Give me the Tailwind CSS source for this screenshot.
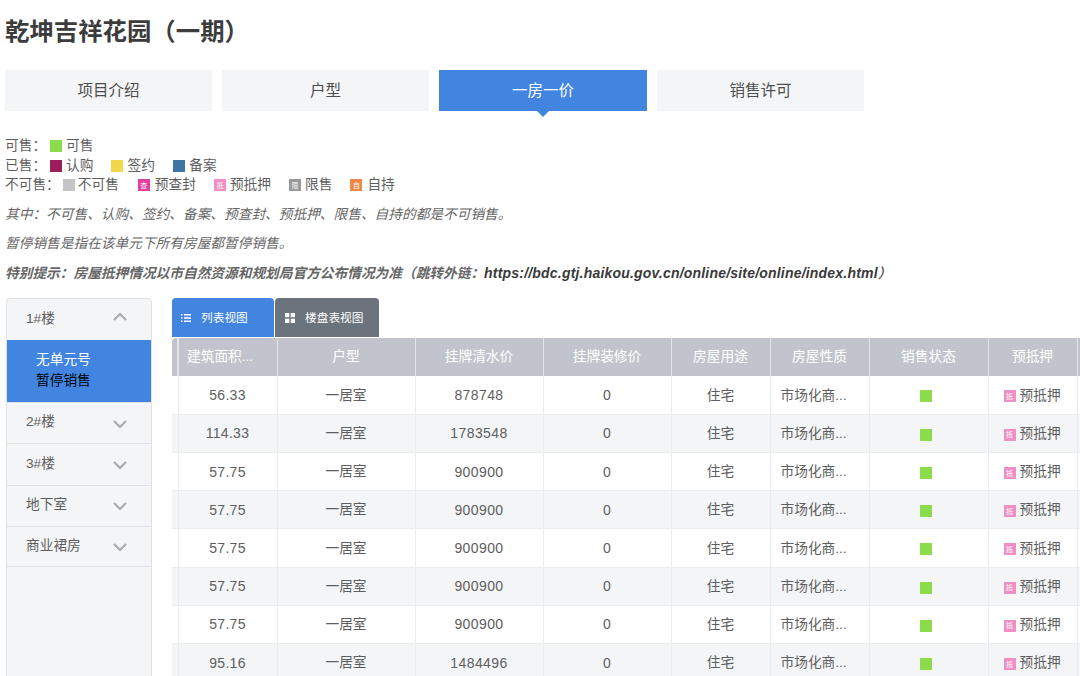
<!DOCTYPE html>
<html lang="zh-CN">
<head>
  <meta charset="UTF-8" />
  <title>乾坤吉祥花园（一期）</title>
  <script src="https://cdn.jsdelivr.net/npm/@tailwindcss/browser@4"></script>
</head>
<body class="bg-white text-[#5e5e5e] text-[13.7px] overflow-hidden font-['Liberation_Sans','Noto_Sans_CJK_SC',sans-serif]">
  <div class="w-[1080px] h-[676px] overflow-hidden pl-[5px]">

    <h1 class="text-[24.4px] leading-[32px] font-bold text-[#3c3c3c] pt-[16px]">乾坤吉祥花园（一期）</h1>

    <!-- tabs -->
    <div class="flex gap-[10px] mt-[22px] text-[15.5px] text-[#4d4d4d]">
      <div class="w-[207px] h-[41px] bg-[#f4f5f7] flex items-center justify-center">项目介绍</div>
      <div class="w-[207px] h-[41px] bg-[#f4f5f7] flex items-center justify-center">户型</div>
      <div class="relative w-[208px] h-[41px] bg-[#4285e0] text-white flex items-center justify-center">
        一房一价
        <span class="absolute left-1/2 -translate-x-1/2 top-full w-0 h-0 border-x-[6px] border-x-transparent border-t-[6px] border-t-[#4285e0]"></span>
      </div>
      <div class="w-[207px] h-[41px] bg-[#f4f5f7] flex items-center justify-center">销售许可</div>
    </div>

    <!-- legend -->
    <div class="mt-[25px] leading-[19.700px]">
      <div class="flex items-center">可售：<i class="w-3 h-3 ml-[4px] mr-1 bg-[#8bdc4a]"></i>可售</div>
      <div class="flex items-center">已售：<i class="w-3 h-3 ml-[4px] mr-1 bg-[#9c1c5c]"></i><span class="mr-[18px]">认购</span><i class="w-3 h-3 mr-1 bg-[#f0d84a]"></i><span class="mr-[18.500px]">签约</span><i class="w-3 h-3 mr-1 bg-[#3f75a3]"></i>备案</div>
      <div class="flex items-center">不可售：<i class="w-3 h-3 ml-[3px] mr-[3px] bg-[#c4c4c4]"></i><span class="mr-[19px]">不可售</span>
        <i class="w-3 h-3 mr-[5px] bg-[#e03fa0] flex items-center justify-center not-italic text-[7px] leading-none text-white">查</i><span class="mr-[18px]">预查封</span>
        <i class="w-3 h-3 mr-1 bg-[#f08fc4] flex items-center justify-center not-italic text-[7px] leading-none text-white">抵</i><span class="mr-[18px]">预抵押</span>
        <i class="w-3 h-3 mr-1 bg-[#999999] flex items-center justify-center not-italic text-[7px] leading-none text-white">限</i><span class="mr-[18px]">限售</span>
        <i class="w-3 h-3 mr-[5px] bg-[#f0884a] flex items-center justify-center not-italic text-[7px] leading-none text-white">自</i>自持</div>
    </div>

    <!-- notes -->
    <div class="italic text-[#666666] mt-[10px] space-y-[9px] leading-[20px]">
      <p>其中：不可售、认购、签约、备案、预查封、预抵押、限售、自持的都是不可销售。</p>
      <p>暂停销售是指在该单元下所有房屋都暂停销售。</p>
      <p class="font-bold">特别提示：房屋抵押情况以市自然资源和规划局官方公布情况为准（跳转外链：<span class="text-[#3a3a3a] text-sm tracking-[0.2px]">https://bdc.gtj.haikou.gov.cn/online/site/online/index.html</span>）</p>
    </div>

    <div class="flex mt-[14px]">
      <!-- building list -->
      <aside class="w-[146px] h-[400px] ml-[1px] shrink-0 bg-[#f4f5f7] border border-[#dfe1e6] rounded-t-[4px]">
        <div class="h-[41px] flex items-center justify-between pl-[19px] pr-[24px] pb-[1px]">1#楼
          <svg class="w-[14px] h-[14px] -mt-[4px] text-[#a5a9b0]" viewBox="0 0 14 14" fill="none" stroke="currentColor" stroke-width="2"><path d="M1 10l6-6 6 6" /></svg>
        </div>
        <div class="h-[62px] bg-[#4285e0] pl-[29px] pt-[9px] leading-[21px]">
          <div class="text-white">无单元号</div>
          <div class="text-black">暂停销售</div>
        </div>
        <div id="buildings"></div>
      </aside>

      <!-- main table -->
      <div class="ml-[20px] w-[908px] shrink-0">
        <div class="flex gap-[1px] text-[11.700px] text-white">
          <div class="w-[102px] h-[39px] bg-[#4285e0] rounded-t-[4px] flex items-center pl-[9px]">
            <svg class="w-[10px] h-[10px] mr-[10px]" viewBox="0 0 10 10" fill="currentColor"><path d="M0 1h1.500v1.500H0zM3 1h7v1.500H3zM0 4.300h1.500v1.500H0zM3 4.300h7v1.500H3zM0 7.500h1.500V9H0zM3 7.500h7V9H3z" /></svg>
            列表视图
          </div>
          <div class="w-[104px] h-[39px] bg-[#6b737c] rounded-t-[4px] flex items-center pl-[10px]">
            <svg class="w-[10px] h-[10px] mr-[10px]" viewBox="0 0 10 10" fill="currentColor"><path d="M0 0h4.300v4.300H0zM5.700 0H10v4.300H5.700zM0 5.700h4.300V10H0zM5.700 5.700H10V10H5.700z" /></svg>
            楼盘表视图
          </div>
        </div>
        <table class="table-fixed border-collapse w-[960px] mt-[1px] text-center">
          <colgroup>
            <col class="w-[6px]" /><col class="w-[99px]" /><col class="w-[138px]" /><col class="w-[128px]" /><col class="w-[128px]" />
            <col class="w-[99px]" /><col class="w-[99px]" /><col class="w-[119px]" /><col class="w-[89px]" /><col class="w-[55px]" />
          </colgroup>
          <thead>
            <tr class="h-[38px] bg-[#c1c4cc] text-white">
              <th class="font-normal border-r-2 border-[#e3e4e8] rounded-tl-[4px]"></th>
              <th class="font-normal border-r border-[#e3e4e8] text-left pl-[8px]">建筑面积...</th>
              <th class="font-normal border-r border-[#e3e4e8]">户型</th>
              <th class="font-normal border-r border-[#e3e4e8]">挂牌清水价</th>
              <th class="font-normal border-r border-[#e3e4e8]">挂牌装修价</th>
              <th class="font-normal border-r border-[#e3e4e8]">房屋用途</th>
              <th class="font-normal border-r border-[#e3e4e8]">房屋性质</th>
              <th class="font-normal border-r border-[#e3e4e8]">销售状态</th>
              <th class="font-normal border-r border-[#e3e4e8]">预抵押</th>
              <th class="font-normal"></th>
            </tr>
          </thead>
          <tbody id="rows"></tbody>
        </table>
      </div>
    </div>
  </div>

<script>
  const buildings = ["2#楼", "3#楼", "地下室", "商业裙房"];
  const chevron = '<svg class="w-[14px] h-[14px] text-[#a5a9b0] mt-[2px]" viewBox="0 0 14 14" fill="none" stroke="currentColor" stroke-width="2"><path d="M1 4l6 6 6-6" /></svg>';
  document.getElementById("buildings").innerHTML = buildings.map(name => `
    <div class="h-[41.250px] border-t border-[#dfe1e6] last:border-b flex items-center justify-between pl-[19px] pr-[24px] pb-[1px]">${name}${chevron}</div>
  `).join("");

  const rows = [
    ["56.33", "878748"], ["114.33", "1783548"], ["57.75", "900900"], ["57.75", "900900"],
    ["57.75", "900900"], ["57.75", "900900"], ["57.75", "900900"], ["95.16", "1484496"]
  ];
  const cell = "border-r border-[#ebecf0]";
  document.getElementById("rows").innerHTML = rows.map(([area, price], i) => `
    <tr class="h-[38.200px] border-b border-[#ebecf0] ${i % 2 ? "bg-[#f4f5f7]" : "bg-white"}">
      <td class="${cell}"></td>
      <td class="${cell} text-sm tracking-[0.3px]">${area}</td>
      <td class="${cell} pt-[2px]">一居室</td>
      <td class="${cell} text-sm tracking-[0.4px]">${price}</td>
      <td class="${cell} text-sm">0</td>
      <td class="${cell} pt-[2px]">住宅</td>
      <td class="${cell} text-left pl-[10px] pt-[2px]">市场化商...</td>
      <td class="${cell}"><i class="block w-3 h-3 ml-[50px] mt-[3px] bg-[#8bdc4a]"></i></td>
      <td class="${cell} pt-[2px]"><span class="flex items-center pl-[15px]"><i class="w-3 h-3 mr-[4px] mt-[1px] bg-[#f08fc4] flex items-center justify-center not-italic text-[7px] leading-none text-white">抵</i>预抵押</span></td>
      <td></td>
    </tr>
  `).join("");
</script>
</body>
</html>
